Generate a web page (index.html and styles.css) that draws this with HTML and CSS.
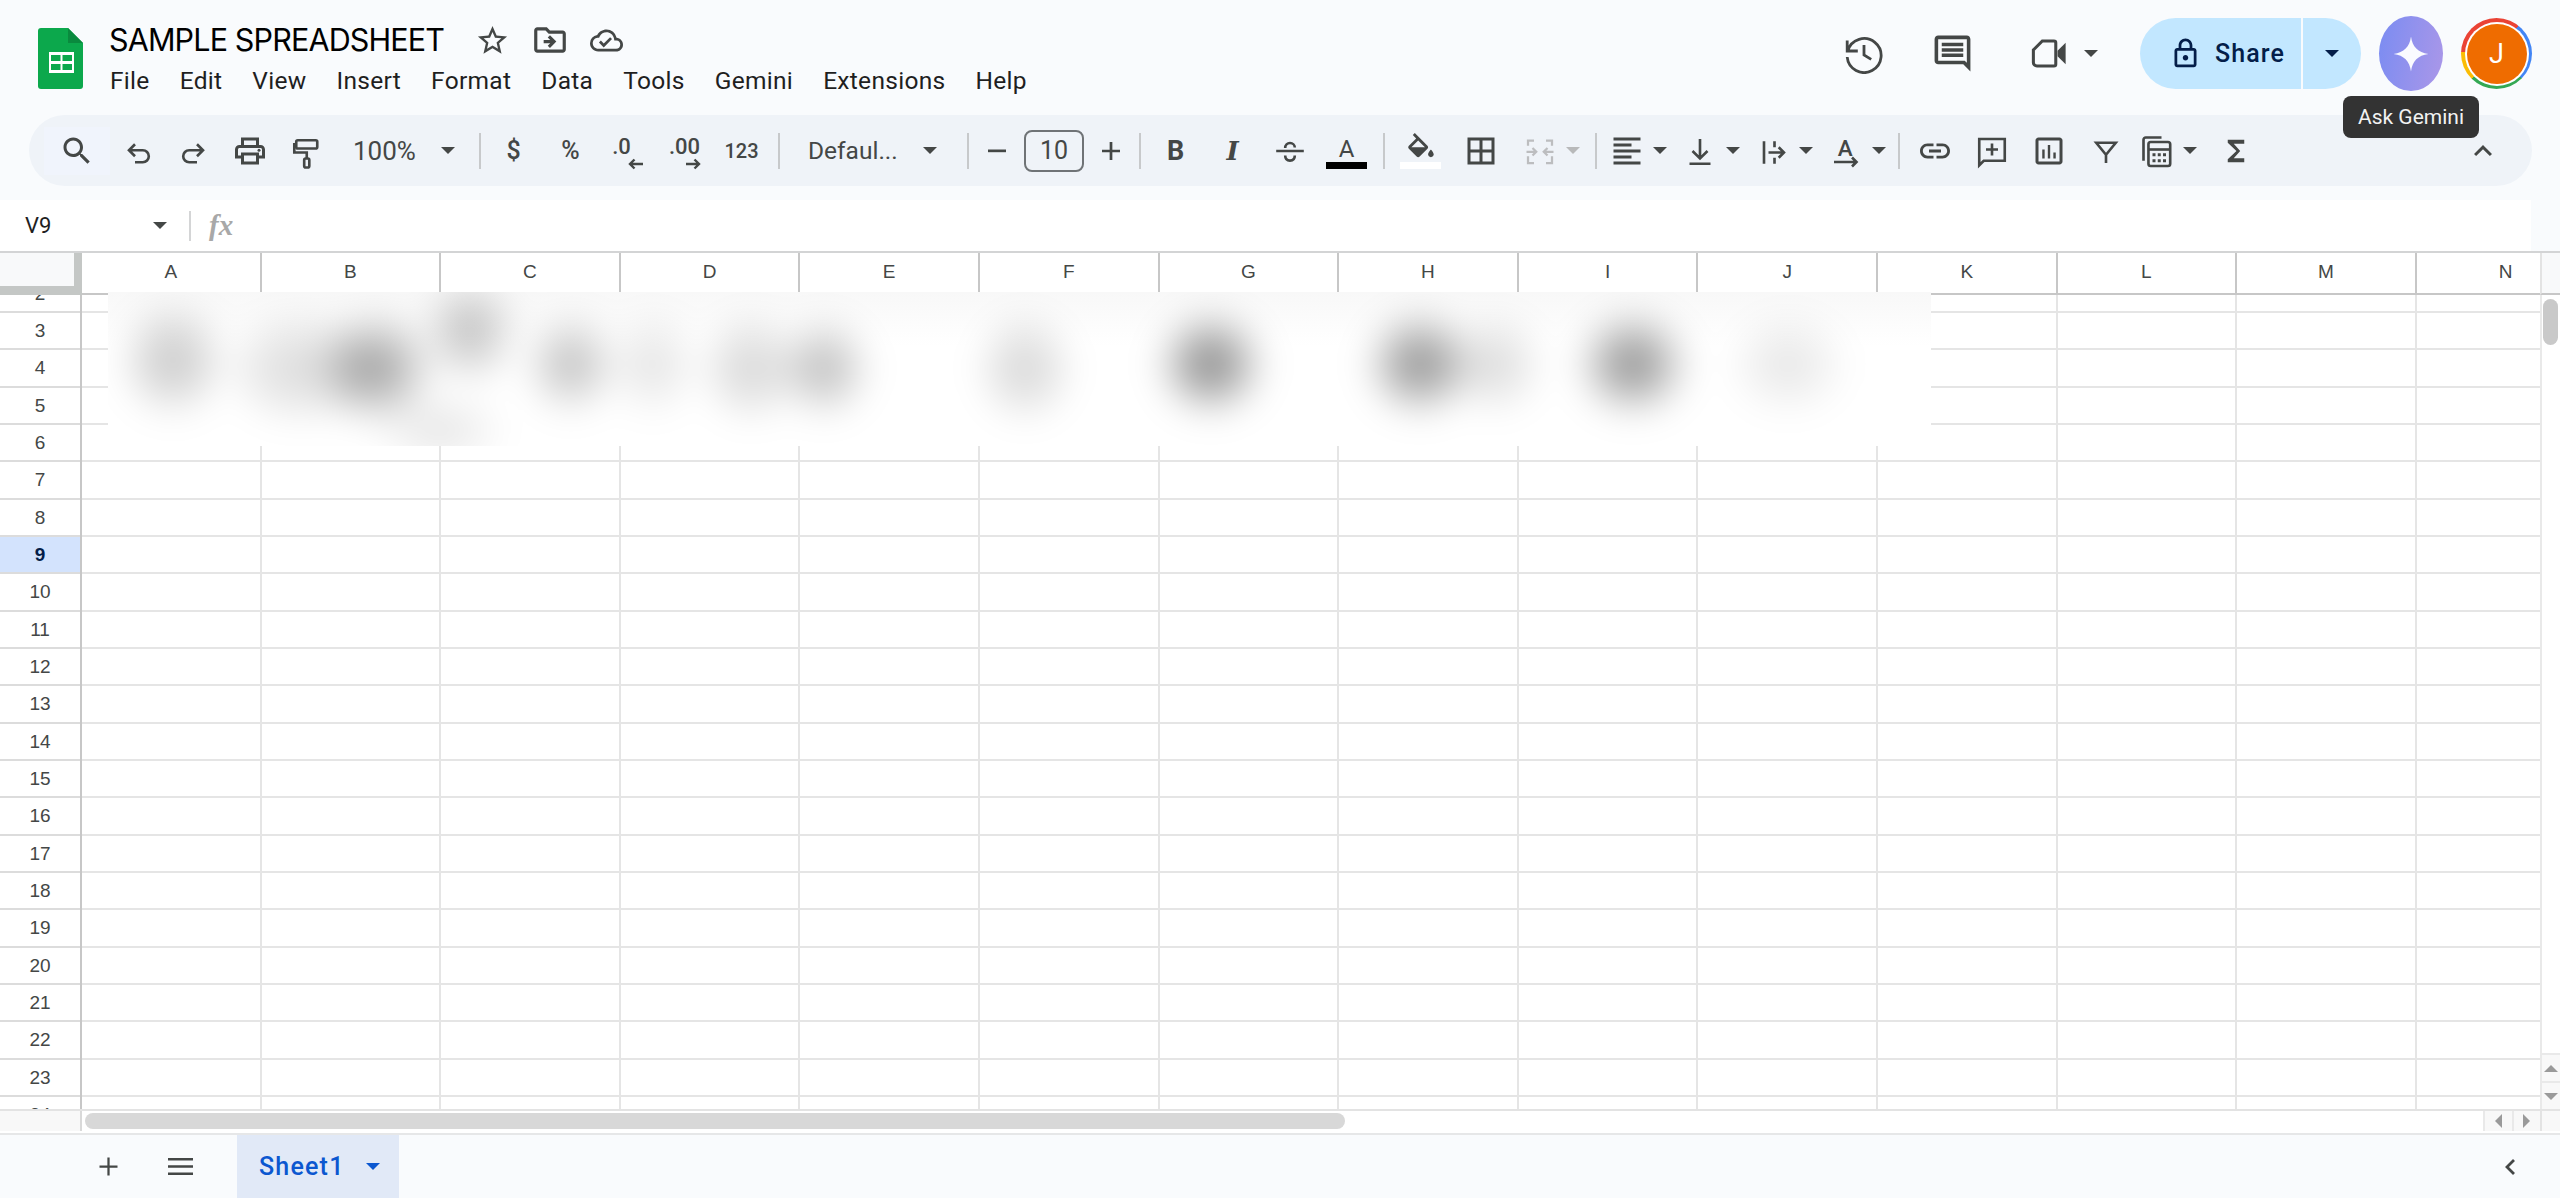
FILE: index.html
```html
<!DOCTYPE html>
<html lang="en">
<head>
<meta charset="utf-8">
<title>SAMPLE SPREADSHEET</title>
<link rel="stylesheet" href="styles.css">
</head>
<body>
<header class="header">
  <svg class="logo" viewBox="0 0 45 61"><path fill="#0ca84c" d="M3 0h27l15 15v43a3 3 0 0 1-3 3H3a3 3 0 0 1-3-3V3a3 3 0 0 1 3-3z"/><path fill="#0a8a3e" d="M30 0l15 15H30z"/><path fill="#fff" d="M11 24h25v21H11z"/><path fill="#0ca84c" d="M13 27h9.500v6H13zM24.500 27H34v6h-9.500zM13 36h9.500v6H13zM24.500 36H34v6h-9.500z"/></svg>
  <div class="titles">
    <div class="title-row">
      <h1 class="doc-title">SAMPLE SPREADSHEET</h1>
      <svg class="ic-star" viewBox="0 0 24 24"><path d="M22 9.240l-7.190-.620L12 2 9.190 8.630 2 9.240l5.460 4.730L5.820 21 12 17.270 18.180 21l-1.630-7.030L22 9.240zM12 15.400l-3.760 2.270 1-4.280-3.320-2.880 4.380-.380L12 6.100l1.710 4.040 4.380.380-3.320 2.880 1 4.280L12 15.400z"/></svg>
      <svg class="ic-folder" viewBox="0 0 24 24"><path d="M20 6h-8l-2-2H4c-1.100 0-2 .9-2 2v12c0 1.100.9 2 2 2h16c1.100 0 2-.9 2-2V8c0-1.100-.9-2-2-2zm0 12H4V6h5.170l2 2H20v10zm-8.010-9l-1.410 1.410L12.160 12H8v2h4.160l-1.590 1.590L11.990 17 16 13.010 11.990 9z"/></svg>
      <svg class="ic-cloud" viewBox="0 0 24 24"><path d="M19.350 10.040A7.490 7.490 0 0 0 12 4C9.110 4 6.540 5.640 5.250 8.040A5.994 5.994 0 0 0 0 14c0 3.310 2.690 6 6 6h13c2.760 0 5-2.240 5-5 0-2.640-2.050-4.780-4.650-4.960zM19 18H6c-2.210 0-4-1.790-4-4 0-2.050 1.530-3.760 3.560-3.970l1.070-.110.5-.950A5.469 5.469 0 0 1 12 6c2.620 0 4.880 1.860 5.390 4.430l.3 1.500 1.530.110A2.980 2.980 0 0 1 22 15c0 1.650-1.350 3-3 3zm-9-3.820l-2.090-2.090L6.500 13.500 10 17l6.010-6.010-1.410-1.410z"/></svg>
    </div>
    <nav class="menu"><span>File</span><span>Edit</span><span>View</span><span>Insert</span><span>Format</span><span>Data</span><span>Tools</span><span>Gemini</span><span>Extensions</span><span>Help</span></nav>
  </div>
  <div class="actions">
    <svg class="ic-history" viewBox="2 2 20 20"><path d="M3.600 5.200v5.300h5.300M3.900 10.400A8.500 8.500 0 1 1 3.600 13.500M12 7.500v5l3.600 2.200"/></svg>
    <svg class="ic-comments" viewBox="0 0 24 24"><path d="M21.990 4c0-1.100-.890-2-1.990-2H4c-1.100 0-2 .9-2 2v12c0 1.100.9 2 2 2h14l4 4-.010-18zM20 4v13.170L18.830 16H4V4h16zM6 12h12v2H6zm0-3h12v2H6zm0-3h12v2H6z"/></svg>
    <svg class="ic-meet" viewBox="0 0 24 24"><path class="meet-body" d="M8 5h6.500a1 1 0 0 1 1 1v12a1 1 0 0 1-1 1H5a2 2 0 0 1-2-2v-7z"/><path d="M16.500 10.500L21 6v12l-4.500-4.500z"/></svg>
    <i class="caret meet-caret"></i>
    <div class="share">
      <div class="share-main">
        <svg class="ic-lock" viewBox="0 0 24 24"><path d="M18 8h-1V6c0-2.760-2.240-5-5-5S7 3.240 7 6v2H6c-1.100 0-2 .9-2 2v10c0 1.100.9 2 2 2h12c1.100 0 2-.9 2-2V10c0-1.100-.9-2-2-2zM9 6c0-1.660 1.340-3 3-3s3 1.340 3 3v2H9V6zm9 14H6V10h12v10zm-6-3c1.100 0 2-.9 2-2s-.9-2-2-2-2 .9-2 2 .9 2 2 2z"/></svg>
        <span>Share</span>
      </div>
      <div class="share-more"><i class="caret caret-navy"></i></div>
    </div>
    <div class="gemini">
      <svg class="ic-spark" viewBox="0 0 24 24"><path d="M12 1C12.900 7.600 16.400 11.100 23 12 16.400 12.900 12.900 16.400 12 23 11.100 16.400 7.600 12.900 1 12 7.600 11.100 11.100 7.600 12 1z"/></svg>
      <div class="tooltip">Ask Gemini</div>
    </div>
    <div class="avatar-ring"><div class="avatar-gap"><div class="avatar">J</div></div></div>
  </div>
</header>

<div class="toolbar">
  <div class="group g1">
    <div class="btn btn-search"><svg class="ico" viewBox="0 0 24 24"><path d="M15.500 14h-.790l-.280-.270C15.410 12.590 16 11.110 16 9.500 16 5.910 13.090 3 9.500 3S3 5.910 3 9.500 5.910 16 9.500 16c1.610 0 3.090-.590 4.230-1.570l.270.280v.790l5 4.990L20.490 19l-4.990-5zm-6 0C7.010 14 5 11.990 5 9.500S7.010 5 9.500 5 14 7.010 14 9.500 11.990 14 9.500 14z"/></svg></div>
    <div class="btn btn-n"><svg class="ico line" viewBox="0 0 24 24"><path d="M10 7.500l-4 4 4 4M6 11.500h9.200a4 4 0 0 1 0 8H10"/></svg></div>
    <div class="btn btn-n"><svg class="ico line" viewBox="0 0 24 24"><path d="M14 7.500l4 4-4 4M18 11.500H8.800a4 4 0 0 0 0 8H14"/></svg></div>
    <div class="btn btn-n"><svg class="ico" viewBox="0 0 24 24"><path d="M19 8h-1V3H6v5H5c-1.660 0-3 1.340-3 3v6h4v4h12v-4h4v-6c0-1.660-1.340-3-3-3zM8 5h8v3H8V5zm8 12v2H8v-4h8v2zm2-2v-2H6v2H4v-4c0-.550.450-1 1-1h14c.550 0 1 .450 1 1v4h-2z"/><circle cx="18" cy="11.500" r="1"/></svg></div>
    <div class="btn btn-n"><svg class="ico line" viewBox="0 0 24 24"><rect x="5.500" y="4.800" width="14" height="5.500" rx="1"/><path d="M5.500 7.500H4.200V13h8.300v4"/><rect x="10.800" y="17" width="3.400" height="6" rx="1"/></svg></div>
    <div class="zoom"><span>100%</span><i class="caret"></i></div>
  </div>
  <i class="sep"></i>
  <div class="group g2">
    <div class="btn tx">$</div>
    <div class="btn tx">%</div>
    <div class="btn dec dec-1"><span>.0</span><svg class="arrow" viewBox="0 0 16 12"><path d="M15 6H2M6.500 1.500L2 6l4.500 4.500"/></svg></div>
    <div class="btn dec"><span>.00</span><svg class="arrow" viewBox="0 0 16 12"><path d="M1 6h13M9.500 1.500L14 6l-4.500 4.500"/></svg></div>
    <div class="btn tx tx-num">123</div>
  </div>
  <i class="sep"></i>
  <div class="group g3"><span>Defaul...</span><i class="caret"></i></div>
  <i class="sep"></i>
  <div class="group g4">
    <div class="btn btn-size"><svg class="ico" viewBox="0 0 24 24"><path d="M6 11h12v1.800H6z"/></svg></div>
    <div class="size-box">10</div>
    <div class="btn btn-size"><svg class="ico" viewBox="0 0 24 24"><path d="M11.100 6h1.800v5.100H18v1.800h-5.100V18h-1.800v-5.100H6v-1.800h5.100z"/></svg></div>
  </div>
  <i class="sep"></i>
  <div class="group g5">
    <div class="btn fmt-b">B</div>
    <div class="btn fmt-i">I</div>
    <div class="btn"><svg class="ico line" viewBox="0 0 24 24"><path d="M2.800 12h18.400M8.800 10c0-2 1.400-3.300 3.200-3.300s3.200 1.300 3.200 3M8.800 15c0 2.200 1.400 3.400 3.200 3.400s3.200-1.200 3.200-3.400"/></svg></div>
    <div class="btn stack"><span class="fmt-a">A</span><i class="swatch swatch-black"></i></div>
  </div>
  <i class="sep"></i>
  <div class="group g6">
    <div class="btn stack"><svg class="ic-fill" viewBox="0 0 24 17.500"><path d="M16.560 8.940L7.620 0 6.210 1.410l2.380 2.380-5.150 5.150c-.590.590-.590 1.540 0 2.120l5.500 5.500c.290.290.680.440 1.060.440s.770-.150 1.060-.440l5.500-5.500c.590-.580.590-1.530 0-2.120zM5.210 10L10 5.210 14.790 10H5.210zM19 11.500s-2 2.170-2 3.500c0 1.100.9 2 2 2s2-.9 2-2c0-1.330-2-3.500-2-3.500z"/></svg><i class="swatch swatch-white"></i></div>
    <div class="btn"><svg class="ico" viewBox="0 0 24 24"><path d="M3 3v18h18V3H3zm8 16H5v-6h6v6zm0-8H5V5h6v6zm8 8h-6v-6h6v6zm0-8h-6V5h6v6z"/></svg></div>
    <div class="mbtn mbtn-merge"><svg class="ico line thin" viewBox="0 0 24 24"><path d="M8 5H4v3.500M4 15.500V20h4M16 5h4v3.500M20 15.500V20h-4M3 12.500h6M7 10l2.500 2.500L7 15M21 12.500h-6M17 10l-2.500 2.500L17 15"/></svg><i class="caret caret-off"></i></div>
  </div>
  <i class="sep"></i>
  <div class="group g7">
    <div class="mbtn"><svg class="ico" viewBox="0 0 24 24"><path d="M15 15H3v2h12v-2zm0-8H3v2h12V7zM3 13h18v-2H3v2zm0 8h18v-2H3v2zM3 3v2h18V3H3z"/></svg><i class="caret"></i></div>
    <div class="mbtn"><svg class="ico line" viewBox="0 0 24 24"><path d="M12 4v13M7 12l5 5 5-5M5 20.500h14"/></svg><i class="caret"></i></div>
    <div class="mbtn"><svg class="ico line" viewBox="0 0 24 24"><path d="M6 5.500v15M13 5.500v4M13 16.500v4M9 13h10M15.800 9.500l3.500 3.500-3.500 3.500"/></svg><i class="caret"></i></div>
    <div class="mbtn"><svg class="ico line" viewBox="0 0 24 24"><text class="rot-a" x="11.500" y="15.500">A</text><path d="M4 19.300h15M16 16.300l3 3-3 3"/></svg><i class="caret"></i></div>
  </div>
  <i class="sep"></i>
  <div class="group g8">
    <div class="btn"><svg class="ico" viewBox="0 0 24 24"><path d="M3.900 12c0-1.710 1.390-3.100 3.100-3.100h4V7H7c-2.760 0-5 2.240-5 5s2.240 5 5 5h4v-1.900H7c-1.710 0-3.100-1.390-3.100-3.100zM8 13h8v-2H8v2zm9-6h-4v1.900h4c1.710 0 3.100 1.390 3.100 3.100s-1.390 3.100-3.100 3.100h-4V17h4c2.760 0 5-2.240 5-5s-2.240-5-5-5z"/></svg></div>
    <div class="btn"><svg class="ico line" viewBox="0 0 24 24"><path d="M3.500 4h17v14.500H6.500l-3 3zM12 7v8M8 11h8"/></svg></div>
    <div class="btn"><svg class="ico" viewBox="0 0 24 24"><path d="M19 3H5c-1.100 0-2 .9-2 2v14c0 1.100.9 2 2 2h14c1.100 0 2-.9 2-2V5c0-1.100-.9-2-2-2zm0 16H5V5h14v14z"/><path d="M7.500 11h1.600v6H7.500zM11.200 8h1.600v9h-1.600zM14.900 13h1.600v4h-1.600z"/></svg></div>
    <div class="btn"><svg class="ico line" viewBox="0 0 24 24"><path d="M5.500 6.500h13L12 14.500zM12 14.500v5.500"/></svg></div>
    <div class="mbtn mbtn-calc"><svg class="ico line" viewBox="0 0 24 24"><path d="M3 18.500V4.500A1.500 1.500 0 0 1 4.500 3H15"/><rect x="6.300" y="6" width="14.500" height="16" rx="1.500"/><path d="M6.300 11h14.500"/><path class="dot-grid" d="M9 13.500h2v2H9zM12.500 13.500h2v2h-2zM16 13.500h2v2h-2zM9 17.500h2v2H9zM12.500 17.500h2v2h-2zM16 17.500h2v2h-2z"/></svg><i class="caret"></i></div>
    <div class="btn"><svg class="ico" viewBox="0 0 24 24"><path d="M17.500 4.500h-11v2l5.800 5.500-5.800 5.500v2h11v-2.600h-7l4.300-4.900-4.300-4.900h7z"/></svg></div>
    <div class="btn btn-collapse"><svg class="ico" viewBox="0 0 24 24"><path d="M12 8l-6 6 1.410 1.410L12 10.830l4.590 4.580L18 14z"/></svg></div>
  </div>
</div>

<div class="formula">
  <div class="namebox"><span>V9</span><i class="caret"></i></div>
  <i class="sep sep-fx"></i>
  <span class="fx">fx</span>
</div>

<main class="sheet">
  <div class="colhead">
    <div class="corner"></div>
    <div class="cols">
      <div class="col">A</div><div class="col">B</div><div class="col">C</div><div class="col">D</div><div class="col">E</div><div class="col">F</div><div class="col">G</div><div class="col">H</div><div class="col">I</div><div class="col">J</div><div class="col">K</div><div class="col">L</div><div class="col">M</div><div class="col">N</div>
    </div>
    <div class="colhead-end"></div>
  </div>
  <div class="body">
    <div class="rowhead">
      <div class="rn rn-first">2</div><div class="rn">3</div><div class="rn">4</div><div class="rn">5</div><div class="rn">6</div><div class="rn">7</div><div class="rn">8</div><div class="rn rn-on">9</div><div class="rn">10</div><div class="rn">11</div><div class="rn">12</div><div class="rn">13</div><div class="rn">14</div><div class="rn">15</div><div class="rn">16</div><div class="rn">17</div><div class="rn">18</div><div class="rn">19</div><div class="rn">20</div><div class="rn">21</div><div class="rn">22</div><div class="rn">23</div><div class="rn">24</div>
    </div>
    <div class="cells">
      <div class="vlines"><i></i><i></i><i></i><i></i><i></i><i></i><i></i><i></i><i></i><i></i><i></i><i></i><i></i><i></i></div>
      <div class="hlines"><i class="h-first"></i><i></i><i></i><i></i><i></i><i></i><i></i><i></i><i></i><i></i><i></i><i></i><i></i><i></i><i></i><i></i><i></i><i></i><i></i><i></i><i></i><i></i><i></i></div>
    </div>
    <div class="vscroll">
      <div class="vthumb"></div>
      <div class="sbtn sbtn-up"><i class="tri tri-up"></i></div>
      <div class="sbtn"><i class="tri tri-down"></i></div>
    </div>
  </div>
  <div class="hscroll">
    <div class="hcorner"></div>
    <div class="htrack"><div class="hthumb"></div></div>
    <div class="hbtn"><i class="tri tri-left"></i></div>
    <div class="hbtn"><i class="tri tri-right"></i></div>
    <div class="hend"></div>
  </div>
  <div class="redacted"></div>
</main>

<footer class="footer">
  <svg class="ft-plus" viewBox="0 0 24 24"><path d="M11 4h2v7h7v2h-7v7h-2v-7H4v-2h7z"/></svg>
  <svg class="ft-list" viewBox="0 0 25 17"><path d="M0 0h25v2.400H0zM0 7.300h25v2.400H0zM0 14.600h25V17H0z"/></svg>
  <div class="tab"><span>Sheet1</span><i class="caret caret-blue"></i></div>
  <svg class="ft-chevron" viewBox="0 0 12 18"><path d="M10 2L3 9l7 7"/></svg>
</footer>
</body>
</html>
```
FILE: styles.css
```css
* { box-sizing: border-box; }
html, body { margin: 0; padding: 0; }
body {
  width: 2560px; height: 1198px; overflow: hidden;
  background: #f9fbfd; color: #444746;
  font-family: Roboto, "Liberation Sans", sans-serif;
  display: flex; flex-direction: column;
}
i { display: block; font-style: normal; }
svg { display: block; flex: none; fill: currentColor; }

/* header */
.header { height: 115px; padding-left: 38px; display: flex; align-items: flex-start; flex: none; }
.logo { width: 45px; height: 61px; margin-top: 28px; }
.titles { margin-left: 26px; }
.title-row { height: 40px; margin-top: 20px; display: flex; align-items: center; }
.doc-title { margin: 0; font: 400 30.500px/40px Inter, Roboto, sans-serif; color: #000; letter-spacing: -.85px; width: 334px; white-space: nowrap; }
.ic-star { width: 35px; height: 35px; margin-left: 32px; }
.ic-folder { width: 38px; height: 38px; margin-left: 21px; }
.ic-cloud { width: 33px; height: 33px; margin-left: 21px; }
.menu { display: flex; gap: 30px; margin-top: 6px; margin-left: 1px; font-size: 24.500px; line-height: 30px; color: #1f1f1f; letter-spacing: .3px; }

.actions { margin-left: auto; margin-right: 28px; height: 107px; display: flex; align-items: center; }
.ic-history { width: 40px; height: 40px; fill: none; stroke: #444746; stroke-width: 1.4; }
.ic-comments { width: 43px; height: 43px; margin-left: 47px; }
.ic-meet { width: 43px; height: 43px; margin-left: 54px; }
.meet-body { fill: none; stroke: currentColor; stroke-width: 1.7; }
.meet-caret { margin-left: 13px; }
.share { width: 221px; height: 71px; margin-left: 42px; border-radius: 36px; background: #c2e7ff; display: flex; color: #041e49; overflow: hidden; }
.share-main { width: 163px; padding-left: 29px; display: flex; align-items: center; border-right: 2px solid #f9fbfd; font-size: 25px; font-weight: 500; letter-spacing: 1.1px; }
.share-main span { margin-left: 13px; }
.ic-lock { width: 33px; height: 33px; }
.share-more { flex: 1; display: flex; align-items: center; justify-content: center; }
.gemini { position: relative; width: 64px; height: 75px; margin-left: 18px; border-radius: 50%; background: linear-gradient(100deg, #7a8cf2, #ab97e8); display: flex; align-items: center; justify-content: center; }
.ic-spark { width: 38px; height: 38px; fill: #fafbff; }
.tooltip { position: absolute; z-index: 5; top: 80px; left: -36px; width: 136px; height: 42px; border-radius: 8px; background: #333; color: #f2f2f2; font-size: 21px; line-height: 42px; text-align: center; }
.avatar-ring { width: 71px; height: 71px; margin-left: 18px; border-radius: 50%; display: flex; align-items: center; justify-content: center; background: conic-gradient(from -38deg, #ea4335 0 76deg, #4285f4 76deg 172deg, #34a853 172deg 262deg, #fbbc04 262deg 310deg, #ea4335 310deg); }
.avatar-gap { width: 64px; height: 64px; border-radius: 50%; background: #fff; display: flex; align-items: center; justify-content: center; }
.avatar { width: 60px; height: 60px; border-radius: 50%; background: #ef6c00; color: #fff; font-size: 27px; line-height: 60px; text-align: center; }

/* carets */
.caret { width: 0; height: 0; flex: none; border-left: 7px solid transparent; border-right: 7px solid transparent; border-top: 7.500px solid #444746; }
.caret-navy { border-top-color: #041e49; }
.caret-off { border-top-color: #b8b9ba; }
.caret-blue { border-top-color: #0b57d0; }

/* toolbar */
.toolbar { flex: none; height: 71px; margin: 0 28px 14px 29px; padding: 0 21px 0 15px; border-radius: 36px; background: #eff3f8; display: flex; align-items: center; font-size: 25px; }
.group { display: flex; align-items: center; height: 100%; flex: none; }
.sep { width: 2px; height: 36px; flex: none; background: #c7c9cb; }
.btn { width: 57px; height: 48px; flex: none; display: flex; align-items: center; justify-content: center; }
.mbtn { width: 73px; height: 48px; flex: none; padding-left: 6.500px; display: flex; align-items: center; gap: 8px; }
.ico { width: 36px; height: 36px; }
.line { fill: none; stroke: currentColor; stroke-width: 1.750; }
.thin { stroke: #bcbdbf; stroke-width: 1.500; }
.g1 { width: 435px; }
.btn-search { width: 66px; background: #f0f4fc; }
.btn-n { width: 56px; }
.zoom { padding-left: 19px; display: flex; align-items: center; gap: 25px; font-size: 26px; }
.g2 { width: 297px; padding-left: 4px; }
.tx { font-weight: 500; font-size: 25px; }
.tx-num { font-size: 20px; font-weight: 500; }
.dec { position: relative; font-weight: 500; font-size: 22px; padding-bottom: 8px; line-height: 26px; }
.dec-1 { padding-right: 12px; }
.arrow { position: absolute; left: 29px; bottom: 5px; width: 16px; height: 12px; fill: none; stroke: currentColor; stroke-width: 2.400; }
.g3 { width: 187px; padding-left: 28px; gap: 25px; font-size: 24.500px; }
.g4 { width: 170px; }
.btn-size { width: 55px; }
.size-box { width: 60px; height: 42px; flex: none; border: 2px solid #6f7376; border-radius: 8px; margin-right: -1px; text-align: center; line-height: 38px; }
.g5 { width: 242px; padding-left: 6px; }
.fmt-b { font-size: 27px; font-weight: 700; }
.fmt-i { font: italic 700 26px "DejaVu Serif", serif; }
.stack { flex-direction: column; justify-content: flex-start; height: 100%; position: relative; }
.fmt-a { font-size: 24px; line-height: 24px; margin-top: 22px; }
.swatch { position: absolute; top: 47px; left: 8px; width: 41px; height: 7px; }
.swatch-black { background: #000; }
.swatch-white { background: #fff; }
.ic-fill { width: 34px; height: 25px; margin-top: 18px; }
.g6 { width: 210px; padding-left: 7px; gap: 3px; }
.mbtn-merge { padding-left: 10px; }
.g7 { width: 301px; padding-left: 5px; }
.rot-a { font: 500 15px Roboto, sans-serif; text-anchor: middle; fill: currentColor; stroke: none; }
.g8 { flex: 1; padding-left: 7px; }
.g8 .btn { width: 56.800px; }
.mbtn-calc { padding-left: 5px; }
.dot-grid { fill: currentColor; stroke: none; }
.g8 .btn-collapse { width: 57px; margin-left: auto; }

/* formula bar */
.formula { flex: none; height: 51px; width: 2531px; background: #fff; display: flex; align-items: center; }
.namebox { width: 189px; padding: 0 22px 0 25px; display: flex; align-items: center; justify-content: space-between; font-size: 22px; color: #1f1f1f; }
.sep-fx { height: 30px; background: #d4d5d6; }
.fx { margin-left: 18px; font: italic 700 29px "Liberation Serif", serif; color: #a8a8a8; }

/* sheet */
.sheet { position: relative; flex: none; height: 882px; background: #fff; border-top: 2px solid #d3d4d5; display: flex; flex-direction: column; font: 19px "Liberation Sans", sans-serif; }
.colhead { flex: none; height: 42px; display: flex; }
.corner { width: 82px; flex: none; height: 42px; background: #f8f9fa; border-right: 8px solid #c4c7c5; border-bottom: 9px solid #c4c7c5; }
.cols { flex: 1; min-width: 0; display: flex; overflow: hidden; border-bottom: 2px solid #c7c7c7; }
.col { width: 179.600px; flex: none; border-right: 2px solid #c7c7c7; text-align: center; line-height: 38px; }
.colhead-end { width: 20px; flex: none; background: #f8f9fa; border-left: 2px solid #e3e3e3; border-bottom: 2px solid #c7c7c7; }
.body { flex: none; height: 814px; display: flex; overflow: hidden; }
.rowhead { width: 82px; flex: none; border-right: 2px solid #c7c7c7; }
.rn { height: 37.333px; border-bottom: 2px solid #dcdcdc; text-align: center; line-height: 36px; }
.rn-first { margin-top: -19.333px; }
.rn-on { background: #d3e3fd; color: #041e49; font-weight: 700; }
.cells { flex: 1; min-width: 0; display: grid; overflow: hidden; }
.vlines, .hlines { grid-area: 1 / 1; display: flex; height: 814px; }
.vlines i { width: 179.600px; flex: none; border-right: 2px solid #e5e5e5; }
.hlines { flex-direction: column; }
.hlines i { height: 37.333px; flex: none; border-bottom: 2px solid #e5e5e5; }
.h-first { margin-top: -19.333px; }
.vscroll { width: 20px; flex: none; border-left: 2px solid #e9e9e9; display: flex; flex-direction: column; }
.vthumb { width: 15px; height: 46px; margin: 4px 0 0 1px; border-radius: 8px; background: #c9c9c9; }
.sbtn { width: 100%; height: 28px; background: #f8f8f8; display: flex; align-items: center; justify-content: center; border-top: 2px solid #e9e9e9; }
.sbtn-up { margin-top: auto; }
.tri { width: 0; height: 0; }
.tri-up { border: 7px solid transparent; border-top: 0; border-bottom: 7px solid #9a9a9a; }
.tri-down { border: 7px solid transparent; border-bottom: 0; border-top: 7px solid #9a9a9a; }
.tri-left { border: 7px solid transparent; border-left: 0; border-right: 7px solid #9a9a9a; }
.tri-right { border: 7px solid transparent; border-right: 0; border-left: 7px solid #9a9a9a; }
.hscroll { flex: none; height: 22px; display: flex; border-top: 2px solid #e3e3e3; }
.hcorner { width: 82px; flex: none; background: #f8f8f8; border-right: 2px solid #d9d9d9; }
.htrack { flex: 1; min-width: 0; padding: 2px 0 0 3px; }
.hthumb { width: 1260px; height: 16px; border-radius: 8px; background: #d8d8d8; }
.hbtn { width: 28.500px; flex: none; background: #f8f8f8; border-left: 2px solid #e9e9e9; display: flex; align-items: center; justify-content: center; }
.hend { width: 20px; flex: none; background: #f8f8f8; border-left: 2px solid #e3e3e3; }

.redacted {
  position: absolute; z-index: 2; top: 39px; left: 108px; width: 1823px; height: 154px; overflow: hidden;
  background: linear-gradient(#f8f8f8, #fff 35%);
}
.redacted::before {
  content: ""; position: absolute; inset: -40px;
  filter: blur(15px);
  background:
    radial-gradient(ellipse 62px 66px at 105px 108px, rgba(0,0,0,.21), rgba(0,0,0,.13) 45%, rgba(0,0,0,.03) 80%, transparent),
    radial-gradient(ellipse 70px 66px at 307px 116px, rgba(0,0,0,.37), rgba(0,0,0,.22) 42%, rgba(0,0,0,.05) 78%, transparent),
    radial-gradient(ellipse 80px 62px at 232px 116px, rgba(0,0,0,.14), rgba(0,0,0,.08) 55%, transparent),
    radial-gradient(ellipse 58px 62px at 402px 80px, rgba(0,0,0,.25), rgba(0,0,0,.13) 45%, rgba(0,0,0,.03) 78%, transparent),
    radial-gradient(ellipse 70px 42px at 372px 178px, rgba(0,0,0,.10), transparent),
    radial-gradient(ellipse 56px 60px at 503px 112px, rgba(0,0,0,.25), rgba(0,0,0,.13) 45%, rgba(0,0,0,.03) 78%, transparent),
    radial-gradient(ellipse 50px 58px at 585px 112px, rgba(0,0,0,.11), transparent),
    radial-gradient(ellipse 56px 60px at 683px 116px, rgba(0,0,0,.16), rgba(0,0,0,.09) 50%, transparent),
    radial-gradient(ellipse 56px 60px at 756px 116px, rgba(0,0,0,.26), rgba(0,0,0,.14) 45%, rgba(0,0,0,.03) 78%, transparent),
    radial-gradient(ellipse 54px 60px at 957px 116px, rgba(0,0,0,.16), rgba(0,0,0,.09) 50%, transparent),
    radial-gradient(ellipse 64px 62px at 1143px 112px, rgba(0,0,0,.46), rgba(0,0,0,.28) 42%, rgba(0,0,0,.06) 78%, transparent),
    radial-gradient(ellipse 64px 62px at 1352px 112px, rgba(0,0,0,.43), rgba(0,0,0,.26) 42%, rgba(0,0,0,.06) 78%, transparent),
    radial-gradient(ellipse 55px 56px at 1426px 112px, rgba(0,0,0,.15), transparent),
    radial-gradient(ellipse 66px 62px at 1565px 112px, rgba(0,0,0,.43), rgba(0,0,0,.26) 42%, rgba(0,0,0,.06) 78%, transparent),
    radial-gradient(ellipse 65px 56px at 1720px 112px, rgba(0,0,0,.10), transparent);
}

/* footer */
.footer { flex: 1; display: flex; align-items: center; border-top: 2px solid #e6e7e8; padding-left: 95px; }
.ft-plus { width: 27px; height: 27px; }
.ft-list { width: 25px; height: 17px; margin-left: 46px; }
.tab { width: 162px; height: 100%; margin-left: 44px; padding-left: 22px; background: #e1e9f7; color: #0b57d0; display: flex; align-items: center; gap: 21px; font-size: 25px; font-weight: 500; letter-spacing: 1.2px; }
.ft-chevron { width: 12px; height: 18px; margin-left: auto; margin-right: 44px; fill: none; stroke: #444746; stroke-width: 2.800; }
```
